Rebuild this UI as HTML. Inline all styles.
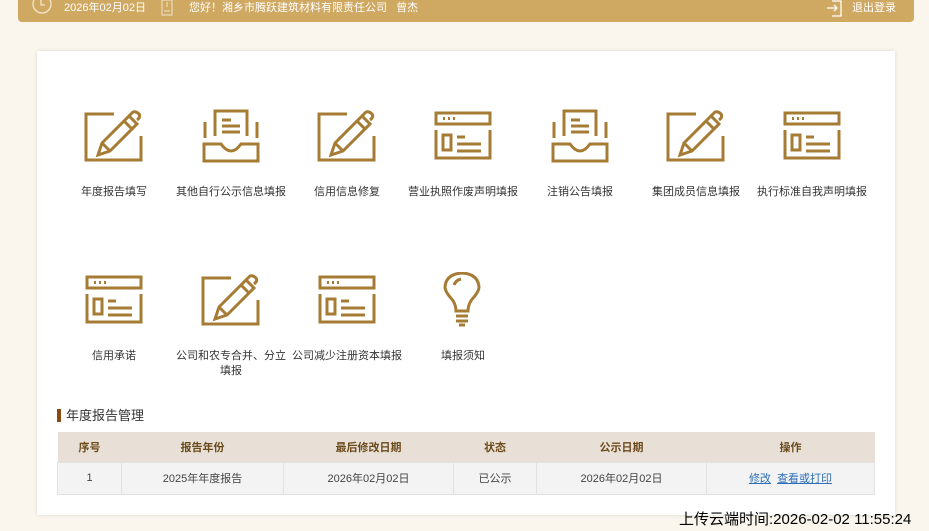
<!DOCTYPE html>
<html><head><meta charset="utf-8"><style>
*{margin:0;padding:0;box-sizing:border-box}
body{width:929px;height:531px;overflow:hidden;background:#faf6ee;font-family:"Liberation Sans","Noto Sans CJK SC",sans-serif;position:relative}
.top{position:absolute;left:18px;top:0;width:896px;height:22px;background:#cfa862;border-radius:0 0 4px 4px;color:#fff;font-size:11px;line-height:14px}
.top span{position:absolute;top:1px}
.card{position:absolute;left:37px;top:51px;width:858px;height:464px;background:#fff;box-shadow:0 0 4px rgba(0,0,0,.12)}
.it{position:absolute;width:116px;text-align:center;font-size:11px;color:#333;line-height:15px}
.it svg{display:block;margin:0 auto 22px}
.ttl{position:absolute;left:20px;top:358px;font-size:13px;color:#333;border-left:4px solid #8a4b12;padding-left:5px;line-height:13px}
table{position:absolute;left:20px;top:381px;width:818px;border-collapse:collapse;font-size:11px;text-align:center}
th{background:#e8e0d6;color:#6b4a1c;height:30px;font-weight:bold}
td{background:#f3f3f3;color:#444;height:32px;border:1px solid #e2e2e2}
a{color:#2e6fb8}
.foot{position:absolute;left:679px;top:508px;font-size:15px;color:#000}
</style></head><body>
<div class="top">
<svg style="position:absolute;left:14px;top:-2px" width="20" height="18"><circle cx="10" cy="6" r="9" fill="none" stroke="#f3e6cc" stroke-width="1.3"/><path d="M9 1V7H13" fill="none" stroke="#f3e6cc" stroke-width="1.3"/></svg>
<span style="left:46px">2026年02月02日</span>
<svg style="position:absolute;left:143px;top:0" width="12" height="16"><rect x="1" y="0" width="10" height="15" fill="none" stroke="#f3e6cc"/><path d="M3 11H9M6 2V7" stroke="#f3e6cc"/></svg>
<span style="left:171px">您好！湘乡市腾跃建筑材料有限责任公司&nbsp;&nbsp;&nbsp;曾杰</span>
<svg style="position:absolute;left:808px;top:0" width="18" height="18"><path d="M6 1H15V16H6" fill="none" stroke="#fff" stroke-width="1.3"/><path d="M1 8H11M8 5L11 8L8 11" fill="none" stroke="#fff" stroke-width="1.3"/></svg>
<span style="left:834px">退出登录</span>
</div>
<div class="card">
<!-- row 1 -->
<div class="it" style="left:19px;top:57px"><svg width="60" height="55" viewBox="0 0 60 55" fill="none" stroke="#a67c34" stroke-width="3"><path d="M30 6H2V52H57V28"/><path d="M14 47L18 35L45 8L53 16L26 43Z"/><path d="M40 13L48 21M18 35L26 43"/><path d="M45 8L49 4Q52 3 55 6Q57 9 53 12"/></svg>年度报告填写</div>
<div class="it" style="left:136px;top:57px"><svg width="60" height="55" viewBox="0 0 60 55" fill="none" stroke="#a67c34" stroke-width="3"><path d="M14 28V3H46V28"/><path d="M21 12H30M21 18H39M21 24H39"/><path d="M4 14V30M56 14V30"/><path d="M3 53V36H20Q30 50 40 36H57V53Z"/></svg>其他自行公示信息填报</div>
<div class="it" style="left:252px;top:57px"><svg width="60" height="55" viewBox="0 0 60 55" fill="none" stroke="#a67c34" stroke-width="3"><path d="M30 6H2V52H57V28"/><path d="M14 47L18 35L45 8L53 16L26 43Z"/><path d="M40 13L48 21M18 35L26 43"/><path d="M45 8L49 4Q52 3 55 6Q57 9 53 12"/></svg>信用信息修复</div>
<div class="it" style="left:368px;top:57px"><svg width="60" height="55" viewBox="0 0 60 55" fill="none" stroke="#a67c34" stroke-width="3"><rect x="3" y="5" width="54" height="11"/><path d="M10 10.5H12M15 10.5H17M20 10.5H22"/><path d="M3 22V50H57V22"/><rect x="10" y="27" width="8" height="15"/><path d="M24 29H32M24 36H48M24 43H48"/></svg>营业执照作废声明填报</div>
<div class="it" style="left:485px;top:57px"><svg width="60" height="55" viewBox="0 0 60 55" fill="none" stroke="#a67c34" stroke-width="3"><path d="M14 28V3H46V28"/><path d="M21 12H30M21 18H39M21 24H39"/><path d="M4 14V30M56 14V30"/><path d="M3 53V36H20Q30 50 40 36H57V53Z"/></svg>注销公告填报</div>
<div class="it" style="left:601px;top:57px"><svg width="60" height="55" viewBox="0 0 60 55" fill="none" stroke="#a67c34" stroke-width="3"><path d="M30 6H2V52H57V28"/><path d="M14 47L18 35L45 8L53 16L26 43Z"/><path d="M40 13L48 21M18 35L26 43"/><path d="M45 8L49 4Q52 3 55 6Q57 9 53 12"/></svg>集团成员信息填报</div>
<div class="it" style="left:717px;top:57px"><svg width="60" height="55" viewBox="0 0 60 55" fill="none" stroke="#a67c34" stroke-width="3"><rect x="3" y="5" width="54" height="11"/><path d="M10 10.5H12M15 10.5H17M20 10.5H22"/><path d="M3 22V50H57V22"/><rect x="10" y="27" width="8" height="15"/><path d="M24 29H32M24 36H48M24 43H48"/></svg>执行标准自我声明填报</div>
<!-- row 2 -->
<div class="it" style="left:19px;top:221px"><svg width="60" height="55" viewBox="0 0 60 55" fill="none" stroke="#a67c34" stroke-width="3"><rect x="3" y="5" width="54" height="11"/><path d="M10 10.5H12M15 10.5H17M20 10.5H22"/><path d="M3 22V50H57V22"/><rect x="10" y="27" width="8" height="15"/><path d="M24 29H32M24 36H48M24 43H48"/></svg>信用承诺</div>
<div class="it" style="left:136px;top:221px"><svg width="60" height="55" viewBox="0 0 60 55" fill="none" stroke="#a67c34" stroke-width="3"><path d="M30 6H2V52H57V28"/><path d="M14 47L18 35L45 8L53 16L26 43Z"/><path d="M40 13L48 21M18 35L26 43"/><path d="M45 8L49 4Q52 3 55 6Q57 9 53 12"/></svg>公司和农专合并、分立填报</div>
<div class="it" style="left:252px;top:221px"><svg width="60" height="55" viewBox="0 0 60 55" fill="none" stroke="#a67c34" stroke-width="3"><rect x="3" y="5" width="54" height="11"/><path d="M10 10.5H12M15 10.5H17M20 10.5H22"/><path d="M3 22V50H57V22"/><rect x="10" y="27" width="8" height="15"/><path d="M24 29H32M24 36H48M24 43H48"/></svg>公司减少注册资本填报</div>
<div class="it" style="left:368px;top:221px"><svg width="60" height="55" viewBox="0 0 60 55" fill="none" stroke="#a67c34" stroke-width="3"><path d="M23 39Q23 31 17 25Q12 19 12 15Q13 2 29 1Q45 2 46 15Q46 19 41 25Q35 31 35 39Z"/><path d="M21 13Q23 8 28 7"/><path d="M23 44H35M23 49H35M26 53H32"/></svg>填报须知</div>
<div class="ttl">年度报告管理</div>
<table>
<tr><th style="width:64px">序号</th><th style="width:162px">报告年份</th><th style="width:170px">最后修改日期</th><th style="width:83px">状态</th><th style="width:170px">公示日期</th><th>操作</th></tr>
<tr><td>1</td><td>2025年年度报告</td><td>2026年02月02日</td><td>已公示</td><td>2026年02月02日</td><td><a href="#">修改</a>&nbsp; <a href="#">查看或打印</a></td></tr>
</table>
</div>
<div class="foot">上传云端时间:2026-02-02 11:55:24</div>
</body></html>
